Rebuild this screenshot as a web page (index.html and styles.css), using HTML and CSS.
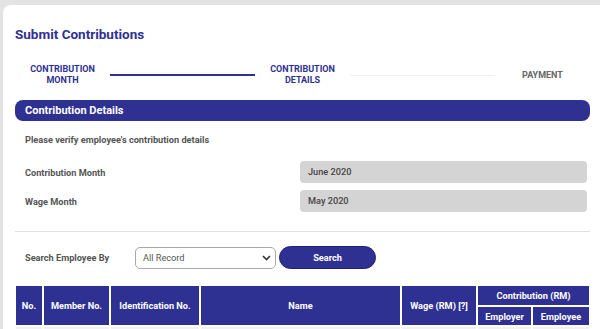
FILE: index.html
```html
<!DOCTYPE html>
<html lang="en">
<head>
  <meta charset="UTF-8" />
  <meta name="viewport" content="width=device-width, initial-scale=1.0" />
  <title>Submit Contributions</title>
  <link rel="stylesheet" href="styles.css">
</head>

<body>
  <div class="card">
    <h1 class="page-title">Submit Contributions</h1>

    <div class="stepper">
      <div class="step active">CONTRIBUTION<br>MONTH</div>
      <div class="step-line done"></div>
      <div class="step active">CONTRIBUTION<br>DETAILS</div>
      <div class="step-line"></div>
      <div class="step">PAYMENT</div>
    </div>

    <div class="section-bar">Contribution Details</div>

    <div class="section-body">
      <p class="hint">Please verify employee's contribution details</p>

      <div class="form-row">
        <label>Contribution Month</label>
        <div class="readonly-field">June 2020</div>
      </div>
      <div class="form-row">
        <label>Wage Month</label>
        <div class="readonly-field">May 2020</div>
      </div>
    </div>

    <hr class="divider">

    <div class="search-row">
      <label>Search Employee By</label>
      <div class="select-box">
        <span>All Record</span>
        <svg width="9" height="6" viewBox="0 0 9 6"><path d="M1 1 L4.5 4.5 L8 1" fill="none" stroke="#333" stroke-width="1.6"/></svg>
      </div>
      <button class="search-btn">Search</button>
    </div>

    <table class="emp-table">
      <thead>
        <tr class="head-top">
          <th rowspan="2" class="col-no">No.</th>
          <th rowspan="2" class="col-member">Member No.</th>
          <th rowspan="2" class="col-id">Identification No.</th>
          <th rowspan="2" class="col-name">Name</th>
          <th rowspan="2" class="col-wage">Wage (RM) [?]</th>
          <th colspan="2">Contribution (RM)</th>
        </tr>
        <tr>
          <th class="col-er">Employer</th>
          <th class="col-ee">Employee</th>
        </tr>
      </thead>
      <tbody>
        <tr>
          <td></td><td></td><td></td><td></td><td></td><td></td><td></td>
        </tr>
      </tbody>
    </table>
  </div>
</body>
</html>
```

FILE: styles.css
```css
:root {
  --navy: #2e3192;
  --text-gray: #555;
  --field-gray: #d4d4d4;
  --line-gray: #e0e0e0;
}

body {
  margin: 0;
  background-color: #e3e3e3;
  font-family: Roboto, "Liberation Sans", sans-serif;
  overflow: hidden;
}

.card {
  background-color: #fff;
  margin: 5px 0 0 3px;
  width: 575px;
  padding: 20px 30px 40px 12px;
  border-top-left-radius: 8px;
}

.page-title {
  margin: 0;
  font-size: 13.5px;
  line-height: 18px;
  color: var(--navy);
}

.stepper {
  display: flex;
  align-items: center;
  margin-top: 21px;
}

.step {
  width: 95px;
  text-align: center;
  font-size: 9px;
  line-height: 11px;
  font-weight: bold;
  color: #666;
}

.step.active {
  color: var(--navy);
}

.step-line {
  flex: 1;
  height: 1px;
  background-color: #f0f0f0;
}

.step-line.done {
  height: 1.5px;
  background-color: var(--navy);
}

.section-bar {
  margin-top: 14px;
  height: 21px;
  line-height: 21px;
  padding-left: 10px;
  background-color: var(--navy);
  color: #fff;
  font-size: 11px;
  font-weight: bold;
  border-radius: 8px;
}

.section-body {
  padding: 0 3px 0 10px;
}

.hint {
  margin: 13px 0 0;
  font-size: 9.2px;
  line-height: 11px;
  font-weight: bold;
  color: var(--text-gray);
}

.form-row {
  display: flex;
  align-items: center;
  margin-top: 7px;
}

.form-row:first-of-type {
  margin-top: 16px;
}

.form-row label,
.search-row label {
  font-size: 9.2px;
  font-weight: bold;
  color: var(--text-gray);
}

.form-row label {
  width: 275px;
}

.readonly-field {
  flex: 1;
  height: 22px;
  line-height: 22px;
  padding-left: 8px;
  background-color: var(--field-gray);
  border-radius: 4px;
  font-size: 9.2px;
  font-weight: 500;
  color: #444;
}

.divider {
  margin: 19px 0 0;
  border: none;
  border-top: 1.5px solid var(--line-gray);
}

.search-row {
  display: flex;
  align-items: center;
  padding-left: 10px;
  margin-top: 14px;
}

.search-row label {
  width: 110px;
}

.select-box {
  width: 141px;
  height: 22px;
  box-sizing: border-box;
  display: flex;
  align-items: center;
  justify-content: space-between;
  padding: 0 4px 0 7px;
  border: 1px solid #aaa;
  border-radius: 5px;
  font-size: 9.2px;
  color: #555;
}

.search-btn {
  margin-left: 3px;
  width: 97px;
  height: 23px;
  border: 1px solid #1f2270;
  border-radius: 12px;
  background-color: var(--navy);
  color: #fff;
  font-family: inherit;
  font-size: 9.2px;
  font-weight: bold;
}

.emp-table {
  margin: 15px 0 0 -1px;
  width: 577px;
  border-collapse: separate;
  border-spacing: 2px;
}

.emp-table th {
  background-color: var(--navy);
  color: #fff;
  font-size: 9.2px;
  font-weight: bold;
  height: 18px;
  padding: 0;
}

.head-top th {
  height: 19px;
}

.col-no { width: 26px; }
.col-member { width: 65px; }
.col-id { width: 88px; }
.col-name { width: 199px; }
.col-wage { width: 74px; }
.col-er { width: 53px; }
.col-ee { width: 56px; }

.emp-table td {
  background-color: #f2f2f2;
  height: 18px;
}
```
